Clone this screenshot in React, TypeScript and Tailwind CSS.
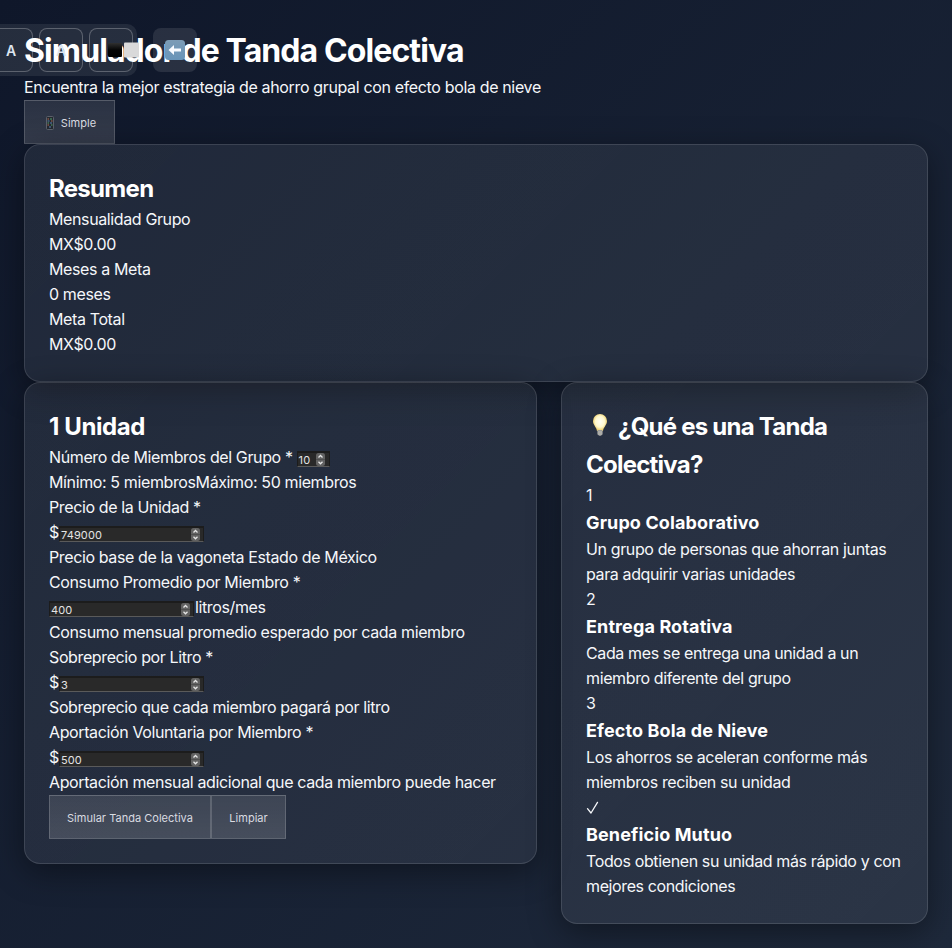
import React from "react";

function Line({ children }: { children: React.ReactNode }) {
  return <p className="h-[25px] whitespace-nowrap leading-[25px]">{children}</p>;
}

function NumberField({ value, small = false }: { value: string; small?: boolean }) {
  return (
    <span
      className={
        "mt-[6px] flex h-4 shrink-0 items-center justify-between border border-t-2 border-[#1c1c1c] border-b-[#5a5a5a] bg-[#292929] pl-px text-[11px] leading-3 tracking-[0.15px] text-[#e4e4e4] " +
        (small ? "w-[33px] pr-1" : "w-[145px] pr-[3px]")
      }
    >
      <span>{value}</span>
      <svg width="9" height="13" viewBox="0 0 9 13" fill="none">
        <rect width="9" height="13" rx="2.5" fill="#626262" />
        <path d="M0 6.5h9" stroke="#484848" strokeWidth="0.7" />
        <path d="M2.5 4.5l2-2 2 2M2.5 8.8l2 2 2-2" stroke="#e6e6e6" strokeWidth="1.3" />
      </svg>
    </span>
  );
}

const card =
  "min-w-0 rounded-[16px] border border-white/[0.12] bg-linear-[135deg] from-white/[0.07] to-white/[0.06] p-6 shadow-[0_8px_32px_rgba(0,0,0,0.4)]";

function Phone() {
  return (
    <svg width="8" height="14" viewBox="0 0 8 14">
      <rect x="0.5" y="0.5" width="7" height="13" rx="1" fill="#242930" stroke="#5b606a" />
      <path d="M1.5 3h1.5M5 5h1.5M1.5 9h1.5" stroke="#b66a52" strokeWidth="1.2" />
      <path d="M4 3h2M1.5 7h1.5M5 9h1.5" stroke="#55a36d" strokeWidth="1.2" />
      <path d="M1.5 5h2M4 7h2M3 11h2" stroke="#5682b2" strokeWidth="1.2" />
    </svg>
  );
}

function Bulb() {
  return (
    <svg width="14" height="23" viewBox="0 0 14 23" className="ml-[7px] mr-[11px] mt-[6px]">
      <defs>
        <radialGradient id="bulb" cx="50%" cy="45%">
          <stop stopColor="#fffef4" />
          <stop offset=".65" stopColor="#fff8cc" />
          <stop offset="1" stopColor="#edd173" />
        </radialGradient>
      </defs>
      <path d="M7 0a7 7 0 0 0-7 7c0 4 3.5 6 4 10h6c.5-4 4-6 4-10a7 7 0 0 0-7-7Z" fill="url(#bulb)" />
      <path d="M4.5 16h5v4q-2.5 4-5 0Z" fill="#9a9a96" />
      <path d="M4.5 18h5M4.5 20h5" stroke="#d0d0cb" strokeWidth=".7" />
    </svg>
  );
}

function Check() {
  return (
    <svg width="13" height="25" viewBox="0 0 13 25" fill="none" aria-label="✓">
      <path d="M1.5 13.7 5 18 11.5 7.4" stroke="#f5f7fa" strokeWidth="1.3" strokeLinecap="round" strokeLinejoin="round" />
    </svg>
  );
}

function Toolbar() {
  const key = "flex size-11 items-center justify-center rounded-lg border border-white/25 bg-white/[0.02] pt-px";
  return (
    <div className="absolute -left-4 top-6 flex items-center">
      <div className="flex h-[52px] gap-1.5 rounded-[10px] bg-white/[0.08] p-1 pl-[5px] text-[14px] font-semibold text-[#dce5f0]">
        <span className={key}>A</span>
        <span className={key}>A</span>
        <span className={key} />
      </div>
      <div className="ml-4 size-11 rounded-lg bg-white/[0.1]" />
    </div>
  );
}

function ToolbarGlyphs() {
  return (
    <svg className="absolute left-[107px] top-10" width="80" height="21" viewBox="0 0 80 21">
      <defs>
        <linearGradient id="ink" x2="0" y2="1">
          <stop stopColor="#303030" />
          <stop offset=".5" stopColor="#050505" />
          <stop offset="1" />
        </linearGradient>
        <linearGradient id="arrow" x2="0" y2="1">
          <stop stopColor="#7c9cb6" />
          <stop offset="1" stopColor="#6995b9" />
        </linearGradient>
      </defs>
      <rect x="1" y="3" width="14" height="14" rx="1" fill="url(#ink)" />
      <rect x="17" y="2.5" width="15" height="15" rx="1" fill="#d9d9da" />
      <rect x="58" y="0" width="20" height="20" rx="3.5" fill="url(#arrow)" />
      <path d="m61.5 10 5.5-5v3.5h7v3h-7V15Z" fill="#f8fbff" />
    </svg>
  );
}

const steps = [
  { n: "1", title: "Grupo Colaborativo", a: "Un grupo de personas que ahorran juntas", b: "para adquirir varias unidades" },
  { n: "2", title: "Entrega Rotativa", a: "Cada mes se entrega una unidad a un", b: "miembro diferente del grupo" },
  { n: "3", title: "Efecto Bola de Nieve", a: "Los ahorros se aceleran conforme más", b: "miembros reciben su unidad" },
  { n: "✓", title: "Beneficio Mutuo", a: "Todos obtienen su unidad más rápido y con", b: "mejores condiciones" },
];

export default function App() {
  const button =
    "flex h-11 items-center justify-center border border-white/[0.17] bg-linear-to-b from-white/[0.11] to-white/[0.15] pt-0.5 text-[11px] tracking-[0.02px] text-[#d9dbe0]";
  return (
    <div className="relative h-[948px] overflow-hidden bg-linear-[135deg] from-[#0f172a] to-[#1e293b] p-6 font-['Inter','Liberation_Sans',sans-serif] text-[16px] tracking-[-0.38px] text-[#f5f7fa]">
      <header>
        <h1 className="h-[51px] text-[32px] font-bold leading-[53px] tracking-[-0.9px] text-white">Simulador de Tanda Colectiva</h1>
        <p className="h-[25px] whitespace-nowrap leading-[25px] tracking-[-0.35px]">
          Encuentra la mejor estrategia de ahorro grupal con efecto bola de nieve
        </p>
        <button className={button + " w-[91px] gap-[7px] pl-[3px]"}>
          <Phone />
          Simple
        </button>
      </header>
      <Toolbar />
      <ToolbarGlyphs />
      <section className={card + " h-[238px]"}>
        <h2 className="h-[38px] text-2xl font-bold leading-[40px] tracking-[-0.7px] text-white">Resumen</h2>
        <Line>Mensualidad Grupo</Line>
        <Line>MX$0.00</Line>
        <Line>Meses a Meta</Line>
        <Line>0 meses</Line>
        <Line>Meta Total</Line>
        <Line>MX$0.00</Line>
      </section>
      <div className="grid grid-cols-[513.3px_366.7px] items-start justify-between">
        <section className={card + " h-[482px]"}>
          <h2 className="h-[38px] text-2xl font-bold leading-[40px] tracking-[-0.4px] text-white">1 Unidad</h2>
          <div className="flex h-[25px] gap-1">
            <Line>Número de Miembros del Grupo *</Line>
            <NumberField value="10" small />
          </div>
          <Line>Mínimo: 5 miembrosMáximo: 50 miembros</Line>
          <Line>Precio de la Unidad *</Line>
          <div className="flex h-[25px]">
            <Line>$</Line>
            <NumberField value="749000" />
          </div>
          <Line>Precio base de la vagoneta Estado de México</Line>
          <Line>Consumo Promedio por Miembro *</Line>
          <div className="flex h-[25px] gap-px">
            <NumberField value="400" />
            <Line>litros/mes</Line>
          </div>
          <Line>Consumo mensual promedio esperado por cada miembro</Line>
          <Line>Sobreprecio por Litro *</Line>
          <div className="flex h-[25px]">
            <Line>$</Line>
            <NumberField value="3" />
          </div>
          <Line>Sobreprecio que cada miembro pagará por litro</Line>
          <Line>Aportación Voluntaria por Miembro *</Line>
          <div className="flex h-[25px]">
            <Line>$</Line>
            <NumberField value="500" />
          </div>
          <Line>Aportación mensual adicional que cada miembro puede hacer</Line>
          <div className="flex">
            <button className={button + " w-[162px]"}>Simular Tanda Colectiva</button>
            <button className={button + " w-[75px]"}>Limpiar</button>
          </div>
        </section>
        <section className={card + " h-[542px] pl-[23.7px]"}>
          <h2 className="h-[76px] whitespace-nowrap pt-px text-2xl font-bold leading-[38px] tracking-[-0.76px] text-white">
            <span className="flex h-[38px]">
              <Bulb />
              ¿Qué es una Tanda
            </span>
            Colectiva?
          </h2>
          {steps.map((s) => (
            <div key={s.n}>
              <Line>{s.n === "✓" ? <Check /> : s.n}</Line>
              <h3 className="h-[29px] text-[18px] font-bold leading-[29px] tracking-[0.12px] text-white">{s.title}</h3>
              <Line>{s.a}</Line>
              <Line>{s.b}</Line>
            </div>
          ))}
        </section>
      </div>
    </div>
  );
}
